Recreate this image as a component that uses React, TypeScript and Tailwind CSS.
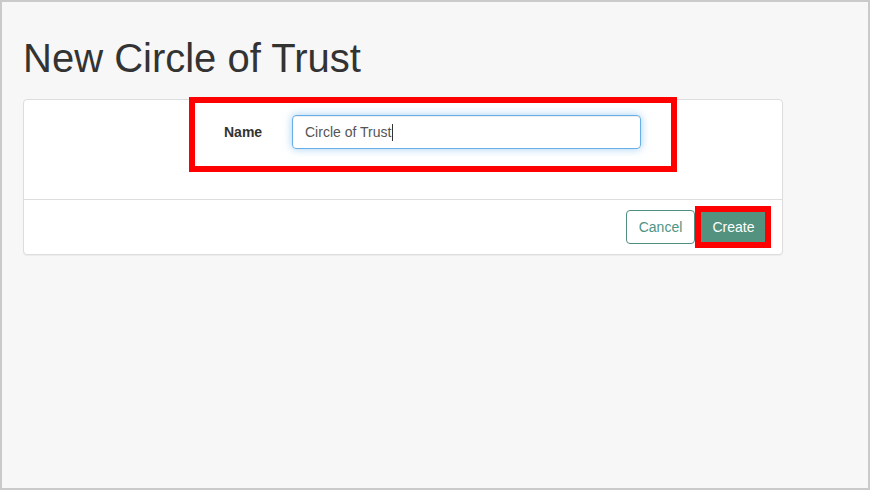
export default function App() {
  return (
    <div
      className="relative box-border h-[490px] w-[870px] overflow-hidden border-2 border-[#cacaca] bg-[#f7f7f7] text-[#333]"
      style={{ fontFamily: '"Liberation Sans", Arial, sans-serif' }}
    >
      <div className="pl-[21px] pt-[34px]">
        <h1 className="m-0 text-[40px] font-normal leading-[44px] text-[#333]">New Circle of Trust</h1>

        {/* card */}
        <div className="mt-[19px] w-[760px] rounded-[4px] border border-[#dddddd] bg-white shadow-[0_1px_1px_rgba(0,0,0,0.05)]">
          <div className="h-[99px] pt-[15px]">
            <div className="flex items-center">
              <label className="w-[268px] pl-[200px] text-[14px] font-bold text-[#333]">Name</label>
              <div className="flex h-[34px] w-[349px] items-center rounded-[4px] border border-[#66afe9] px-[12px] text-[14px] text-[#555] shadow-[inset_0_1px_1px_rgba(0,0,0,0.075),0_0_8px_rgba(102,175,233,0.6)]">
                <span>Circle of Trust</span>
                <span className="ml-[1px] inline-block h-[17px] w-[1px] bg-[#333]" />
              </div>
            </div>
          </div>

          <div className="flex justify-end gap-[4px] border-t border-[#dddddd] py-[10px] pr-[14px]">
            <button className="h-[34px] w-[69px] rounded-[4px] border border-[#4f8f81] bg-white text-[14px] text-[#4f9384]">
              Cancel
            </button>
            <button className="h-[34px] w-[69px] rounded-[4px] border border-[#52927f] bg-[#52927f] text-[14px] text-white">
              Create
            </button>
          </div>
        </div>
      </div>

      {/* highlight boxes */}
      <div className="absolute left-[187px] top-[95px] h-[75px] w-[488px] border-[6px] border-[#ff0000]" />
      <div className="absolute left-[693px] top-[204px] h-[42px] w-[76px] border-[6px] border-[#ff0000]" />
    </div>
  );
}
